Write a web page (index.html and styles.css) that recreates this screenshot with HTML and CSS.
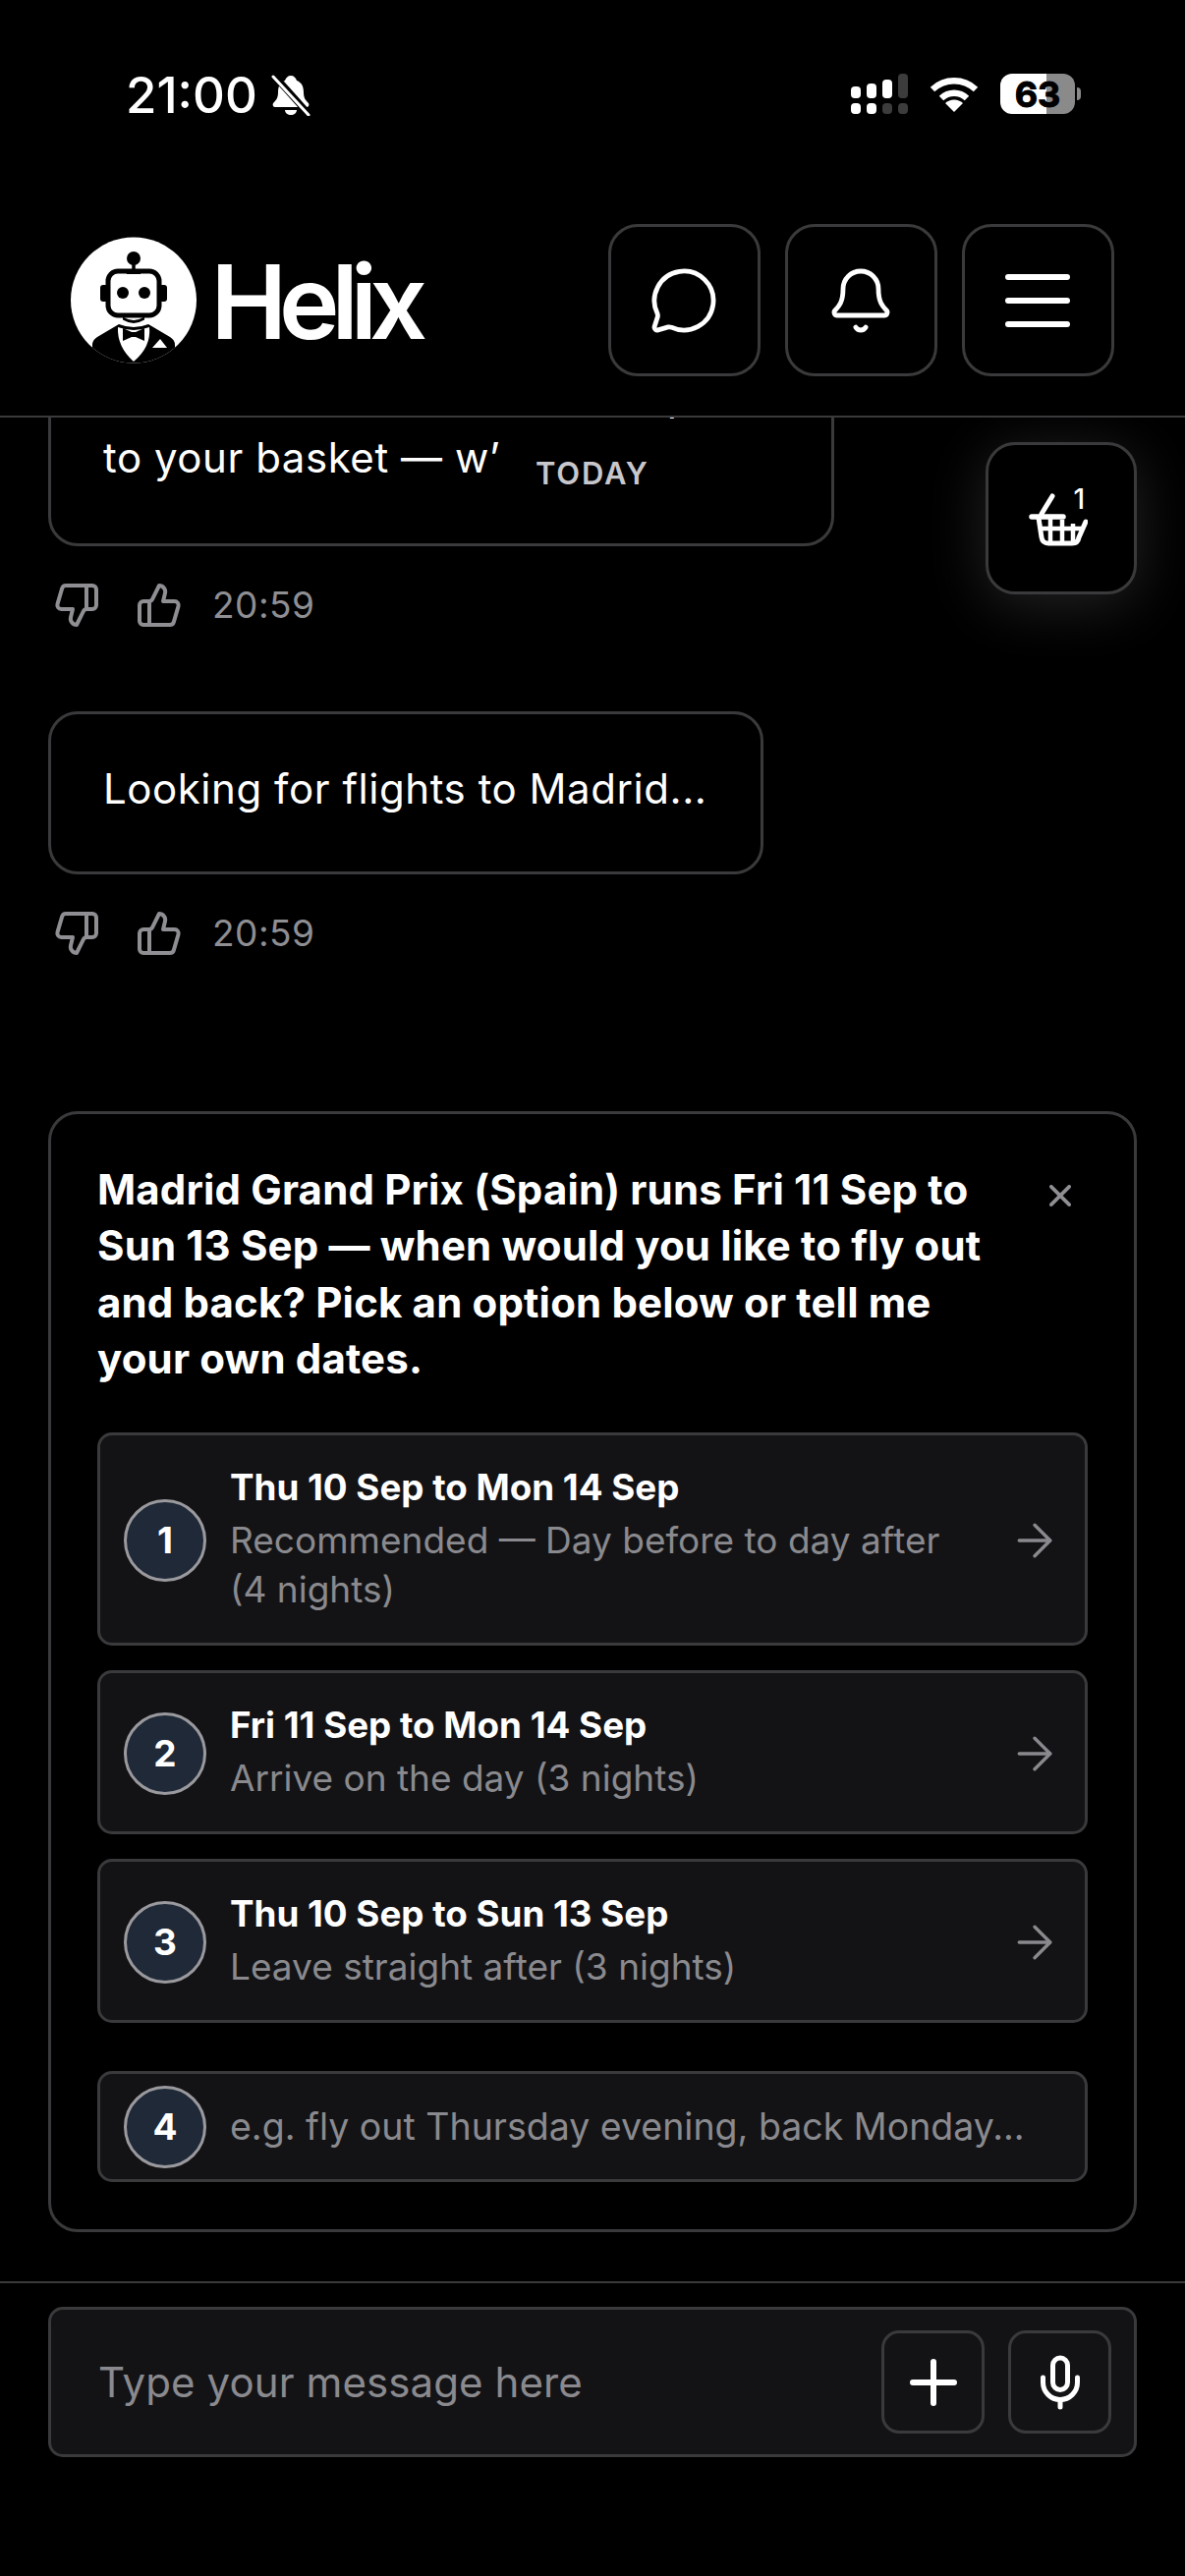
FILE: index.html
```html
<!DOCTYPE html>
<html lang="en">
<head>
    <meta charset="UTF-8">
    <meta name="viewport" content="width=device-width, initial-scale=1.0">
    <title>Helix</title>
    <link rel="stylesheet" href="styles.css">
</head>
<body>
    <div class="app">
        <div class="status-bar">
            <div class="status-left">
                <span class="status-time">21:00</span>
                <svg class="status-mute" viewBox="0 0 40 42">
                    <path d="M20 1c3 0 5 2 6 5 5 2 7 6 7 12 0 6 2 8 5 11 1 2 0 4-2 4H4c-2 0-3-2-2-4 3-3 5-5 5-11 0-6 2-10 7-12 1-3 3-5 6-5Z" fill="#fff"/>
                    <path d="M14 36h12c0 3-3 5-6 5s-6-2-6-5Z" fill="#fff"/>
                    <path d="M3 1l36 40" stroke="#000" stroke-width="7"/>
                    <path d="M2 2l36 39" stroke="#fff" stroke-width="3" stroke-linecap="round"/>
                </svg>
            </div>
            <div class="status-right">
                <div class="signal">
                    <div class="signal-col"><i class="bar-1"></i><i></i></div>
                    <div class="signal-col"><i class="bar-2"></i><i></i></div>
                    <div class="signal-col"><i class="bar-3"></i><i class="off"></i></div>
                    <div class="signal-col"><i class="bar-4 off"></i><i class="off"></i></div>
                </div>
                <svg class="wifi" viewBox="0 0 50 37" fill="none" stroke="#fff" stroke-width="6.5">
                    <path d="M3 14a32 32 0 0 1 44 0"/>
                    <path d="M12 23a19 19 0 0 1 26 0"/>
                    <path d="M25 37l-9-9a13 13 0 0 1 18 0Z" fill="#fff" stroke="none"/>
                </svg>
                <div class="battery">
                    <div class="battery-body"><span>63</span></div>
                    <div class="battery-nub"></div>
                </div>
            </div>
        </div>

        <header class="topbar">
            <div class="brand">
                <svg class="brand-logo" viewBox="0 0 128 129">
                    <defs><clipPath id="logo-clip"><circle cx="64" cy="64.5" r="64"/></clipPath></defs>
                    <circle cx="64" cy="64.5" r="64" fill="#fff"/>
                    <g clip-path="url(#logo-clip)">
                        <path d="M22 129V110q0-5 5-8l22-13q15 6 30 0l22 13q5 3 5 8v19Z" fill="#000"/>
                        <path d="M48 92q16 6 32 0q2 20-16 35q-17-15-16-35Z" fill="#fff"/>
                        <path d="M53 93l9 4h4l9-4v13l-9-4h-4l-9 4Z" fill="#000"/>
                        <path d="M83 113l8-9 7 9Z" fill="#fff"/>
                        <path d="M54 83q10 6 20 0v1q-10 6-20 0Z" fill="#000" stroke="#000" stroke-width="2"/>
                    </g>
                    <circle cx="64" cy="22" r="7" fill="#000"/>
                    <path d="M64 27v6" stroke="#000" stroke-width="3.5"/>
                    <rect x="30" y="49" width="8" height="17" rx="3" fill="#000"/>
                    <rect x="90" y="49" width="8" height="17" rx="3" fill="#000"/>
                    <rect x="38" y="35" width="52" height="45" rx="10" fill="#fff" stroke="#000" stroke-width="5"/>
                    <path d="M55 33l2 5h14l2-5Z" fill="#000"/>
                    <circle cx="53" cy="57" r="6" fill="#000"/>
                    <circle cx="75" cy="57" r="6" fill="#000"/>
                </svg>
                <span class="brand-name">Helix</span>
            </div>
            <div class="topbar-actions">
                <button class="icon-btn">
                    <svg class="icon-72" viewBox="0 0 24 24"><path d="M2.992 16.342a2 2 0 0 1 .094 1.167l-1.065 3.29a1 1 0 0 0 1.236 1.168l3.413-.998a2 2 0 0 1 1.099.092 10 10 0 1 0-4.777-4.719"/></svg>
                </button>
                <button class="icon-btn">
                    <svg class="icon-72" viewBox="0 0 24 24"><path d="M10.268 21a2 2 0 0 0 3.464 0"/><path d="M3.262 15.326A1 1 0 0 0 4 17h16a1 1 0 0 0 .74-1.673C19.41 13.956 18 12.499 18 8A6 6 0 0 0 6 8c0 4.499-1.411 5.956-2.738 7.326"/></svg>
                </button>
                <button class="icon-btn">
                    <svg class="menu-icon" viewBox="0 0 78 78"><path d="M9 15h60M9 39h60M9 63h60"/></svg>
                </button>
            </div>
        </header>

        <main class="chat">
            <div class="bubble-wrap bubble-wrap-first">
                <div class="bubble bubble-first">I've added the Madrid track pass<br>to your basket — w’</div>
                <div class="msg-meta">
                    <svg class="thumb" viewBox="0 0 24 24"><path d="M17 14V2"/><path d="M9 18.12 10 14H4.17a2 2 0 0 1-1.92-2.56l2.33-8A2 2 0 0 1 6.5 2H20a2 2 0 0 1 2 2v8a2 2 0 0 1-2 2h-2.76a2 2 0 0 0-1.79 1.11L12 22a3.13 3.13 0 0 1-3-3.88Z"/></svg>
                    <svg class="thumb" viewBox="0 0 24 24"><path d="M7 10v12"/><path d="M15 5.88 14 10h5.83a2 2 0 0 1 1.92 2.56l-2.33 8A2 2 0 0 1 17.5 22H4a2 2 0 0 1-2-2v-8a2 2 0 0 1 2-2h2.76a2 2 0 0 0 1.79-1.11L12 2a3.13 3.13 0 0 1 3 3.88Z"/></svg>
                    <span class="msg-time">20:59</span>
                </div>
            </div>

            <div class="bubble-wrap">
                <div class="bubble">Looking for flights to Madrid...</div>
                <div class="msg-meta">
                    <svg class="thumb" viewBox="0 0 24 24"><path d="M17 14V2"/><path d="M9 18.12 10 14H4.17a2 2 0 0 1-1.92-2.56l2.33-8A2 2 0 0 1 6.5 2H20a2 2 0 0 1 2 2v8a2 2 0 0 1-2 2h-2.76a2 2 0 0 0-1.79 1.11L12 22a3.13 3.13 0 0 1-3-3.88Z"/></svg>
                    <svg class="thumb" viewBox="0 0 24 24"><path d="M7 10v12"/><path d="M15 5.88 14 10h5.83a2 2 0 0 1 1.92 2.56l-2.33 8A2 2 0 0 1 17.5 22H4a2 2 0 0 1-2-2v-8a2 2 0 0 1 2-2h2.76a2 2 0 0 0 1.79-1.11L12 2a3.13 3.13 0 0 1 3 3.88Z"/></svg>
                    <span class="msg-time">20:59</span>
                </div>
            </div>

            <section class="question">
                <div class="question-head">
                    <h2 class="question-title">Madrid Grand Prix (Spain) runs Fri 11 Sep to Sun 13 Sep — when would you like to fly out and back? Pick an option below or tell me your own dates.</h2>
                    <svg class="question-close" viewBox="0 0 24 24"><path d="M2 2l20 20M22 2 2 22"/></svg>
                </div>

                <div class="options">
                    <div class="option">
                        <div class="option-num">1</div>
                        <div class="option-text">
                            <div class="option-title">Thu 10 Sep to Mon 14 Sep</div>
                            <div class="option-sub">Recommended — Day before to day after (4 nights)</div>
                        </div>
                        <svg class="option-arrow" viewBox="0 0 24 24"><path d="M5 12h14"/><path d="m12 5 7 7-7 7"/></svg>
                    </div>
                    <div class="option">
                        <div class="option-num">2</div>
                        <div class="option-text">
                            <div class="option-title">Fri 11 Sep to Mon 14 Sep</div>
                            <div class="option-sub">Arrive on the day (3 nights)</div>
                        </div>
                        <svg class="option-arrow" viewBox="0 0 24 24"><path d="M5 12h14"/><path d="m12 5 7 7-7 7"/></svg>
                    </div>
                    <div class="option">
                        <div class="option-num">3</div>
                        <div class="option-text">
                            <div class="option-title">Thu 10 Sep to Sun 13 Sep</div>
                            <div class="option-sub">Leave straight after (3 nights)</div>
                        </div>
                        <svg class="option-arrow" viewBox="0 0 24 24"><path d="M5 12h14"/><path d="m12 5 7 7-7 7"/></svg>
                    </div>
                    <div class="option option-custom">
                        <div class="option-num">4</div>
                        <div class="option-hint">e.g. fly out Thursday evening, back Monday...</div>
                    </div>
                </div>
            </section>

            <div class="date-pill">TODAY</div>
            <button class="basket-btn">
                <svg class="basket-icon" viewBox="0 0 60 54" fill="none" stroke="#fff" stroke-linecap="round">
                    <path d="M24 3 13 21" stroke-width="5"/>
                    <path d="M3 24h32" stroke-width="5.5"/>
                    <path d="M10 25l3 20q1 6 7 6h24q6 0 7-6l7-16" stroke-width="5"/>
                    <path d="M11 36h45M22 26v24M34 27v24M45 31v20" stroke-width="4.5" stroke-linecap="butt"/>
                </svg>
                <span class="basket-count">1</span>
            </button>
        </main>

        <footer class="composer">
            <div class="composer-box">
                <span class="composer-placeholder">Type your message here</span>
                <button class="composer-btn">
                    <svg class="plus-icon" viewBox="0 0 48 48"><path d="M3 24h42M24 3v42"/></svg>
                </button>
                <button class="composer-btn">
                    <svg class="mic-icon" viewBox="0 0 24 24"><path d="M12 19v3"/><path d="M19 10v2a7 7 0 0 1-14 0v-2"/><rect x="9" y="2" width="6" height="13" rx="3"/></svg>
                </button>
            </div>
        </footer>
    </div>
</body>
</html>
```

FILE: styles.css
```css
* {
    box-sizing: border-box;
}
body {
    margin: 0;
    background: #000;
    color: #fff;
    font-family: Inter, "Noto Sans", sans-serif;
    overflow: hidden;
}
button {
    padding: 0;
    font: inherit;
    color: inherit;
}
svg {
    display: block;
    flex-shrink: 0;
}
.app {
    width: 1206px;
    height: 2622px;
    display: flex;
    flex-direction: column;
}

/* status bar */
.status-bar {
    height: 190px;
    padding: 75px 106px 0 128px;
    display: flex;
    justify-content: space-between;
    align-items: flex-start;
}
.status-left {
    display: flex;
    align-items: center;
    gap: 14px;
}
.status-time {
    font-size: 51px;
    line-height: 44px;
    font-weight: 500;
}
.status-mute {
    width: 40px;
    height: 42px;
}
.status-right {
    display: flex;
    align-items: center;
    gap: 22px;
}
.signal {
    display: flex;
    gap: 6px;
    height: 41px;
}
.signal-col {
    width: 10px;
    display: flex;
    flex-direction: column;
    justify-content: flex-end;
    gap: 5px;
}
.signal-col i {
    display: block;
    height: 11px;
    background: #fff;
    border-radius: 4px;
}
.signal-col i.off {
    background: #3c3c3c;
}
.signal-col i.bar-1 {
    height: 12px;
}
.signal-col i.bar-2 {
    height: 15px;
}
.signal-col i.bar-3 {
    height: 19px;
}
.signal-col i.bar-4 {
    height: 25px;
}
.wifi {
    width: 50px;
    height: 37px;
}
.battery {
    display: flex;
    align-items: center;
    gap: 2px;
}
.battery-body {
    width: 76px;
    height: 41px;
    border-radius: 12px;
    background: linear-gradient(90deg, #fff 47px, #8a8a8a 47px);
    display: flex;
    justify-content: center;
    align-items: center;
}
.battery-body span {
    color: #000;
    font-size: 36px;
    font-weight: 700;
    -webkit-text-stroke: 1px #000;
    paint-order: stroke;
}
.battery-nub {
    width: 4px;
    height: 13px;
    background: #8a8a8a;
    border-radius: 0 4px 4px 0;
}

/* top bar */
.topbar {
    height: 235px;
    flex-shrink: 0;
    padding: 38px 72.5px 0 72px;
    border-bottom: 2px solid #3a3a3c;
    display: flex;
    justify-content: space-between;
    align-items: flex-start;
}
.brand {
    display: flex;
    align-items: center;
    gap: 14.5px;
    margin-top: 13px;
}
.brand-logo {
    width: 128px;
    height: 129px;
}
.brand-name {
    padding-top: 3px;
    font-size: 104px;
    line-height: 120px;
    font-weight: 600;
    letter-spacing: -8px;
}
.topbar-actions {
    display: flex;
    gap: 25px;
}
.icon-btn {
    width: 155px;
    height: 155px;
    background: #000;
    border: 3px solid #3a3a3c;
    border-radius: 30px;
    display: flex;
    justify-content: center;
    align-items: center;
}
.icon-72 {
    width: 72px;
    height: 72px;
    fill: none;
    stroke: #fff;
    stroke-width: 1.6;
    stroke-linecap: round;
    stroke-linejoin: round;
}
.menu-icon {
    width: 78px;
    height: 78px;
    fill: none;
    stroke: #fff;
    stroke-width: 6;
    stroke-linecap: round;
}

/* chat */
.chat {
    flex: 1;
    min-height: 0;
    position: relative;
    overflow: hidden;
    padding: 0 49px 50px;
    display: flex;
    flex-direction: column;
    justify-content: flex-end;
}
.bubble-wrap {
    flex-shrink: 0;
    margin-bottom: 86px;
}
.bubble-wrap-first {
    margin-bottom: 84.5px;
}
.bubble-wrap + .question {
    margin-top: 70.5px;
}
.bubble {
    display: inline-block;
    border: 3px solid #3a3a3c;
    border-radius: 30px;
    padding: 44px 55px 53px 53px;
    font-size: 42px;
    line-height: 63px;
    letter-spacing: 0.55px;
}
.bubble-first {
    width: 800px;
    padding-bottom: 56px;
}
.msg-meta {
    margin-top: 36px;
    padding-left: 5px;
    display: flex;
    align-items: center;
    gap: 36px;
    color: #8e8e93;
}
.thumb {
    width: 48px;
    height: 48px;
    fill: none;
    stroke: #8e8e93;
    stroke-width: 2;
    stroke-linecap: round;
    stroke-linejoin: round;
}
.msg-time {
    margin-left: -6px;
    font-size: 37px;
    line-height: 48px;
    letter-spacing: 0.5px;
}
.date-pill {
    position: absolute;
    top: 39px;
    left: 545px;
    font-size: 31px;
    line-height: 36px;
    font-weight: 600;
    letter-spacing: 1.8px;
    color: #c7c7cc;
}
.basket-btn {
    position: absolute;
    top: 25px;
    right: 49px;
    width: 154px;
    height: 155px;
    background: #000;
    border: 3px solid #3a3a3c;
    border-radius: 30px;
    box-shadow: 0 10px 60px rgba(255, 255, 255, 0.14);
}
.basket-icon {
    position: absolute;
    left: 41px;
    top: 49px;
    width: 60px;
    height: 54px;
}
.basket-count {
    position: absolute;
    left: 86.5px;
    top: 40px;
    font-size: 28px;
    line-height: 30px;
    font-weight: 500;
}

/* question card */
.question {
    flex-shrink: 0;
    border: 3px solid #3a3a3c;
    border-radius: 30px;
    padding: 48.2px 47px 48.5px;
}
.question-head {
    display: flex;
    justify-content: space-between;
    align-items: flex-start;
}
.question-title {
    margin: 0;
    width: 900px;
    font-size: 42px;
    line-height: 57.5px;
    font-weight: 700;
    letter-spacing: 0.15px;
}
.question-close {
    width: 22px;
    height: 22px;
    margin: 24px 17px 0 0;
    fill: none;
    stroke: #8e8e93;
    stroke-width: 4;
    stroke-linecap: round;
}
.options {
    margin-top: 45.8px;
    display: flex;
    flex-direction: column;
    gap: 24.5px;
}
.option {
    background: #131316;
    border: 3px solid #3a3a3c;
    border-radius: 15px;
    padding: 27.5px 24px 29px 24px;
    display: flex;
    align-items: center;
    gap: 24px;
}
.option-custom {
    margin-top: 24px;
    padding-top: 12px;
    padding-bottom: 11px;
}
.option-num {
    width: 84px;
    height: 84px;
    flex-shrink: 0;
    margin-top: 4px;
    background: #1f2937;
    border: 3px solid #9a9a9e;
    border-radius: 50%;
    display: flex;
    justify-content: center;
    align-items: center;
    font-size: 37px;
    font-weight: 700;
}
.option-custom .option-num {
    margin-top: 0;
}
.option-text {
    flex: 1;
    min-width: 0;
}
.option-title {
    margin-bottom: 3px;
    font-size: 36.75px;
    line-height: 52px;
    font-weight: 700;
}
.option-sub {
    font-size: 37px;
    line-height: 50px;
    color: #8a8a8e;
}
.option-hint {
    font-size: 37.5px;
    line-height: 50px;
    color: #8a8a8e;
}
.option-arrow {
    width: 54px;
    height: 54px;
    margin: 4px 0 0 16px;
    fill: none;
    stroke: #8a8a8e;
    stroke-width: 1.5;
    stroke-linecap: round;
    stroke-linejoin: round;
}

/* composer */
.composer {
    height: 300px;
    flex-shrink: 0;
    padding: 24px 49px 0;
    border-top: 2px solid #3a3a3c;
}
.composer-box {
    height: 153px;
    background: #131316;
    border: 3px solid #3a3a3c;
    border-radius: 15px;
    padding: 0 23px 0 48px;
    display: flex;
    align-items: center;
    gap: 24px;
}
.composer-placeholder {
    flex: 1;
    font-size: 42px;
    letter-spacing: 0.1px;
    color: #8a8a8e;
}
.composer-btn {
    width: 105px;
    height: 105px;
    background: #131316;
    border: 3px solid #3a3a3c;
    border-radius: 18px;
    display: flex;
    justify-content: center;
    align-items: center;
}
.plus-icon {
    width: 48px;
    height: 48px;
    fill: none;
    stroke: #fff;
    stroke-width: 6;
    stroke-linecap: round;
}
.mic-icon {
    width: 60px;
    height: 60px;
    fill: none;
    stroke: #fff;
    stroke-width: 2;
    stroke-linecap: round;
    stroke-linejoin: round;
}
```
